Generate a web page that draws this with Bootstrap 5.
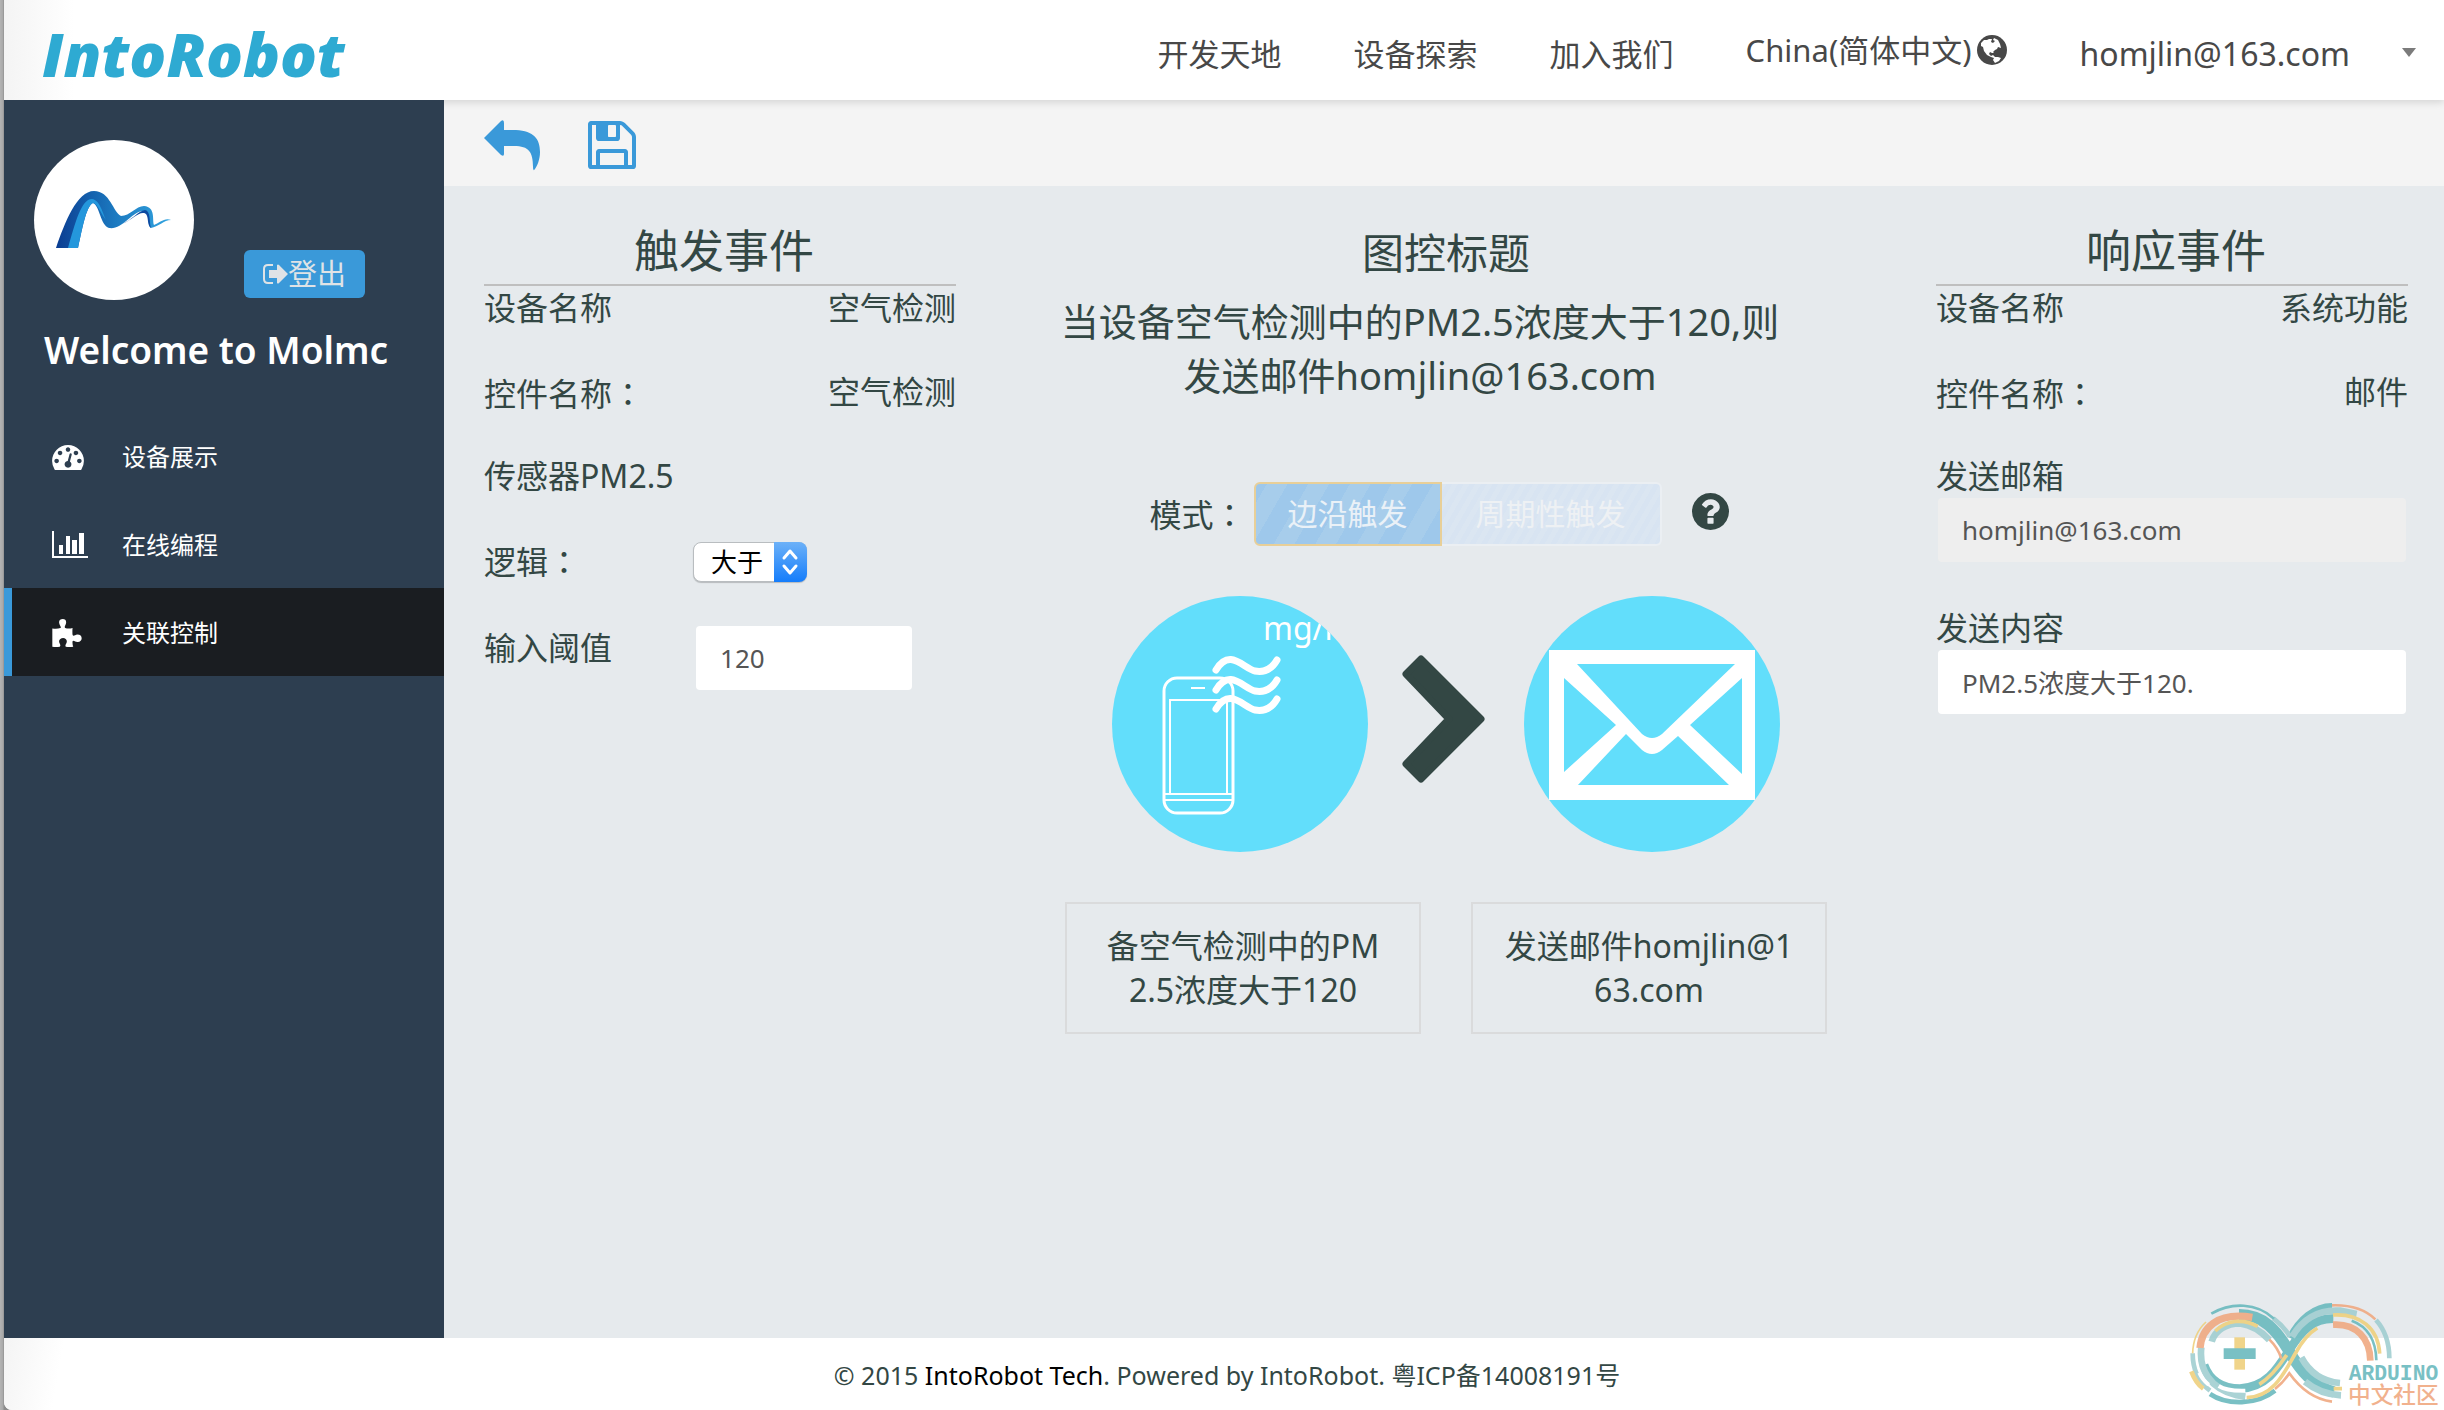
<!DOCTYPE html>
<html lang="zh-CN">
<head>
<meta charset="utf-8">
<meta name="viewport" content="width=device-width, initial-scale=1">
<title>IntoRobot</title>
<link href="https://cdn.jsdelivr.net/npm/bootstrap@5.3.0/dist/css/bootstrap.min.css" rel="stylesheet">
<style>
  :root { --ink: #334744; --blue: #3a99d9; --navy: #2d3e50; --sky: #62defb; }
  body {
    font-family: "Noto Sans", "Noto Sans CJK SC", sans-serif;
    font-size: 32px; line-height: 44px; color: var(--ink);
    background: linear-gradient(90deg, #b4b4b4, #a8a8a8 3px, #8c8c8c 4px);
    padding-left: 4px;
  }
  a { text-decoration: none; color: inherit; }
  svg { display: block; flex: none; }
  .wide-colon { font-family: "Noto Sans CJK TC", sans-serif; }

  .shell { background: #fff; border-bottom-left-radius: 8px; overflow: hidden; }
  .topbar {
    height: 100px; padding: 0 28px 0 38px; z-index: 2;
    background: linear-gradient(90deg, #f4f4f4, #fff 70px);
    box-shadow: 0 2px 8px rgba(0, 0, 0, .14);
  }
  .brand { font: italic 800 61px/70px "Open Sans", sans-serif; color: #2eaad2; padding-top: 8px; }
  .topnav { font-size: 31px; color: #484848; gap: 72px; }
  .account { font-size: 32px; }
  .raised { margin-bottom: 8px; }
  .drop { border: 7px solid transparent; border-top: 9px solid #7b7b7b; border-bottom: 0; margin: 0 0 4px 52px; }

  .sidebar { width: 440px; background: var(--navy); z-index: 3; color: #fff; padding-top: 40px; }
  .profile { padding: 0 30px; }
  .exit-btn {
    background: var(--blue); color: #dfe3e6; border: 0; border-radius: 6px;
    font-size: 29px; line-height: 48px; padding: 0 19px; margin: 0 0 2px 50px;
  }
  .welcome { font-size: 37px; line-height: 52px; font-weight: 600; padding: 24px 40px 36px; margin: 0; }
  .menu a { height: 88px; font-size: 24px; padding: 2px 0 0 40px; border-left: 8px solid transparent; }
  .menu a.active { background: #1a1d21; border-color: var(--blue); }
  .menu-icon { width: 70px; }

  .tools { height: 86px; background: #f4f4f4; padding: 4px 40px 0; gap: 48px; }
  .tools button { background: none; border: 0; padding: 0; }
  .board { background: #e6eaed; padding: 32px 36px 0 40px; }
  .side-panel { flex: 0 0 472px; }
  .panel-title { font-size: 45px; line-height: 66px; font-weight: 400; border-bottom: 2px solid #bfbfbf; margin: 0; padding-left: 8px; text-align: center; }
  .line { height: 84px; }
  .field {
    width: 100%; height: 64px; border: 0; border-radius: 4px; background: #fff;
    font-size: 26px; color: #555; padding: 0 24px;
  }
  .field:disabled { background: #eee; opacity: 1; }
  .field-wrap { padding: 0 2px; }
  .gap-below { margin-bottom: 44px; }
  .short { width: 216px; margin-left: 84px; }
  .picker {
    appearance: none; width: 114px; height: 40px; margin-left: 97px; padding: 0 0 0 17px;
    border: 1px solid #b9bdc0; border-radius: 8px; background: #fff; color: #000; font-size: 26px; line-height: 36px;
    box-shadow: 0 1px 1px rgba(0, 0, 0, .2);
  }
  .picker-caps { right: 0; top: 0; width: 33px; height: 40px; border-radius: 0 8px 8px 0; background: linear-gradient(#6cb1f8, #157dfb); pointer-events: none; }

  .center-title { font-size: 42px; line-height: 66px; font-weight: 400; margin: 0; padding-top: 2px; text-align: center; }
  .summary { font-size: 38px; line-height: 54px; padding: 8px 52px 0 0; margin: 0; text-align: center; }
  .mode { padding: 80px 14px 0 0; }
  .mode-btn { border: 2px solid; height: 64px; font-size: 30px; padding: 0 32px; line-height: 56px; }
  .mode-edge { color: #eaf1f7; border-color: #e8cf98; border-radius: 6px 0 0 6px;
    background: repeating-linear-gradient(-60deg, #9ec8eb 0 18px, #a7cdeb 18px 36px); }
  .mode-cycle { color: #eef1f4; border-color: #ebeff3; border-left: 0; border-radius: 0 6px 6px 0; padding: 0 34px;
    background: repeating-linear-gradient(-60deg, #d8e4f2 0 5px, #dbe6f2 5px 10px); }
  .help { margin: 0 0 6px 30px; }
  .flow { padding-top: 50px; }
  .chev { margin: 0 39px 0 34px; padding-bottom: 10px; }
  .notes { padding-top: 50px; gap: 50px; }
  .note { width: 356px; height: 132px; border: 2px solid #dadbdc; text-align: center; padding-top: 20px; }

  .site-foot { height: 72px; font-size: 25px; padding: 2px 0 0 6px; background: linear-gradient(100deg, #f4f4f4, #fff 60px); }
  .site-foot a { color: #000; }
  .watermark { right: 0; bottom: 0; z-index: 5; pointer-events: none; }
</style>
</head>
<body>
<div class="shell d-flex flex-column min-vh-100 position-relative">
  <header class="topbar d-flex align-items-center justify-content-between position-relative">
    <a href="#" class="brand">IntoRobot</a>
    <nav class="topnav d-flex align-items-center pt-2">
      <a href="#">开发天地</a>
      <a href="#">设备探索</a>
      <a href="#">加入我们</a>
      <a href="#" class="raised d-flex align-items-center gap-1">China(简体中文)
        <svg width="32" height="32" viewBox="-1 -1 32 32"><circle cx="15" cy="15" r="15" fill="#484848"/><path fill="#fff" d="M4 8L7 5L10 5L12 4L15 4L14 7L16 8L18 6L16 5L17 3L21 5L23 9L24 13L21 12L20 14L18 15L16 17L17 18L15 18L13 17L12 19L14 21L16 20L18 22L21 22L24 23L22 26L18 28L16 25L17 23L14 22L10 20L7 16L6 12L4 11Z"/></svg></a>
      <a href="#" class="account d-flex align-items-center">homjlin@163.com<span class="drop"></span></a>
    </nav>
  </header>

  <div class="d-flex flex-grow-1">
    <aside class="sidebar flex-shrink-0 position-relative">
      <div class="profile d-flex align-items-end">
        <svg width="160" height="160" viewBox="0 0 160 160" role="img" aria-label="Molmc">
          <defs>
            <linearGradient id="rib" x1="0" x2="1"><stop offset="0" stop-color="#0b3d91"/><stop offset=".5" stop-color="#1b78bf"/><stop offset="1" stop-color="#33a5e0"/></linearGradient>
          </defs>
          <circle cx="80" cy="80" r="80" fill="#fff"/>
          <path fill="url(#rib)" d="M22 108C31 82 43 51 60 51C76 51 79 72 87 76C96 76 102 66 110 66C122 67 118 80 120 85C125 83 131 77 137 80C130 80 124 87 117 88C112 84 118 70 108 71C97 73 88 90 75 88C66 85 66 66 59 63C52 66 48 90 44 108Z"/>
          <path fill="#2497dc" d="M34 108C41 84 47 59 58 59C66 60 69 74 72 80C67 74 64 64 59 63C52 66 48 90 44 108Z"/>
          <path fill="#0d4aa0" d="M88 84C98 80 104 71 111 70C117 71 115 82 117 88C112 84 116 73 109 73C103 73 98 80 88 84Z"/>
        </svg>
        <button type="button" class="exit-btn d-flex align-items-center">
          <svg width="25" height="20" viewBox="0 0 25 20"><path d="M10 1H5Q1 1 1 5V15Q1 19 5 19H10" fill="none" stroke="#dfe3e6" stroke-width="2"/><path fill="#dfe3e6" d="M6 6H14V1Q15 0 16 1L25 10L16 19Q15 20 14 19V14H6Z"/></svg><span>登出</span>
        </button>
      </div>
      <h2 class="welcome">Welcome to Molmc</h2>
      <nav class="menu">
        <a href="#" class="d-flex align-items-center"><span class="menu-icon"><svg width="32" height="25" viewBox="0 256 1792 1408" fill="#fff"><path d="M384 1152q0-53-37.500-90.500t-90.500-37.500-90.500 37.500-37.500 90.500 37.500 90.500 90.500 37.500 90.500-37.500 37.500-90.500zm192-448q0-53-37.500-90.500t-90.500-37.500-90.500 37.500-37.500 90.500 37.500 90.500 90.500 37.500 90.500-37.500 37.500-90.500zm428 481l101-382q6-26-7.500-48.500t-38.500-29.500-48 6.500-30 39.500l-101 382q-60 5-107 43.500t-63 98.500q-20 77 20 146t117 89 146-20 89-117q16-60-6-117t-72-91zm660-33q0-53-37.500-90.500t-90.500-37.500-90.500 37.500-37.500 90.500 37.500 90.500 90.500 37.500 90.500-37.500 37.500-90.500zm-640-640q0-53-37.500-90.500t-90.500-37.500-90.500 37.500-37.500 90.500 37.500 90.500 90.500 37.500 90.500-37.500 37.500-90.500zm448 192q0-53-37.500-90.500t-90.500-37.500-90.500 37.500-37.500 90.500 37.500 90.500 90.500 37.500 90.500-37.500 37.500-90.500zm320 448q0 261-141 483-19 29-54 29h-1402q-35 0-54-29-141-221-141-483 0-182 71-348t191-286 286-191 348-71 348 71 286 191 191 286 71 348z"/></svg></span>设备展示</a>
        <a href="#" class="d-flex align-items-center"><span class="menu-icon"><svg width="36" height="28" viewBox="0 0 36 28" fill="#fff"><path d="M0 0h2v25h34v2H0zM7 14h4v9H7zM14 5h4v18h-4zM20 9h5v14h-5zM27 2h5v21h-5z"/></svg></span>在线编程</a>
        <a href="#" class="active d-flex align-items-center"><span class="menu-icon"><svg width="30" height="28" viewBox="0 0 87 83" fill="#fff"><path d="M0 28Q14 30 24 27C28 24 20 18 20 10C20 3 25 0 31 0S41 3 41 10C41 18 34 22 38 27Q48 30 60 27Q59 38 60 47C62 53 67 47 74 46C83 46 87 51 87 57S82 69 74 68C68 68 63 61 60 66Q59 75 62 82Q50 84 40 82C36 78 43 74 43 66C43 60 38 56 32 56S20 60 20 66C20 73 27 78 22 82Q11 84 0 82Z"/></svg></span>关联控制</a>
      </nav>
    </aside>

    <div class="d-flex flex-column flex-grow-1">
      <div class="tools d-flex align-items-center">
        <button type="button" aria-label="返回"><svg width="56" height="51" viewBox="0 0 56 51"><path fill="#3a99d9" d="M0 18L17 1Q20-1 20 3V10H32C50 11 56 19 56 32C56 40 53 46 51 49Q49 52 49 47C49 32 45 26 30 26H20V34Q20 37 17 35Z"/></svg></button>
        <button type="button" aria-label="保存"><svg width="48" height="48" viewBox="128 128 1536 1536" fill="#3a99d9"><path d="M512 1536h768v-384h-768v384zm896 0h128v-896q0-14-10-38.500t-20-34.500l-281-281q-10-10-34-20t-39-10v416q0 40-28 68t-68 28h-576q-40 0-68-28t-28-68v-416h-128v1280h128v-416q0-40 28-68t68-28h832q40 0 68 28t28 68v416zm-384-928v-320q0-13-9.500-22.500t-22.500-9.500h-192q-13 0-22.500 9.500t-9.500 22.500v320q0 13 9.500 22.500t22.500 9.500h192q13 0 22.500-9.500t9.500-22.500zm640 32v928q0 40-28 68t-68 28h-1344q-40 0-68-28t-28-68v-1344q0-40 28-68t68-28h928q40 0 88 20t76 48l280 280q28 28 48 76t20 88z"/></svg></button>
      </div>

      <main class="board d-flex flex-grow-1">
        <section class="side-panel">
          <h3 class="panel-title">触发事件</h3>
          <div class="line d-flex justify-content-between"><span>设备名称</span><span>空气检测</span></div>
          <div class="line d-flex justify-content-between"><span>控件名称<span class="wide-colon" lang="zh-TW">：</span></span><span>空气检测</span></div>
          <div class="line">传感器PM2.5</div>
          <div class="line d-flex align-items-start">
            <label for="logic">逻辑<span class="wide-colon" lang="zh-TW">：</span></label>
            <div class="position-relative d-flex pt-1 ms-3">
              <select id="logic" class="picker"><option>大于</option></select>
              <span class="picker-caps position-absolute mt-1"><svg width="33" height="40" viewBox="0 0 33 40" fill="none" stroke="#fff" stroke-width="3" stroke-linecap="round" stroke-linejoin="round"><path d="M10 16l6-7 6 7M10 24l6 7 6-7"/></svg></span>
            </div>
          </div>
          <div class="line d-flex align-items-start pt-1">
            <label for="limit">输入阈值</label>
            <input id="limit" class="field short" value="120">
          </div>
        </section>

        <section class="flex-grow-1">
          <h3 class="center-title">图控标题</h3>
          <p class="summary">当设备空气检测中的PM2.5浓度大于120,则<br>发送邮件homjlin@163.com</p>
          <div class="mode d-flex align-items-center justify-content-center">
            <span class="me-2">模式<span class="wide-colon" lang="zh-TW">：</span></span>
            <button type="button" class="mode-btn mode-edge">边沿触发</button>
            <button type="button" class="mode-btn mode-cycle">周期性触发</button>
            <svg class="help" width="37" height="37" viewBox="128 128 1536 1536" fill="#334744" role="img" aria-label="帮助"><path d="M1024 1376v-192q0-14-9-23t-23-9h-192q-14 0-23 9t-9 23v192q0 14 9 23t23 9h192q14 0 23-9t9-23zm256-672q0-88-55.500-163t-138.500-116-170-41q-243 0-371 213-15 24 8 42l132 100q7 6 19 6 16 0 25-12 53-68 86-92 34-24 86-24 48 0 85.500 26t37.500 59q0 38-20 61t-68 45q-63 28-115.500 86.500t-52.500 125.500v36q0 14 9 23t23 9h192q14 0 23-9t9-23q0-19 21.500-49.500t54.500-49.500q32-18 49-28.500t46-35 44.500-48 28-60.500 12.500-81zm384 192q0 209-103 385.500t-279.500 279.500-385.500 103-385.500-103-279.500-279.500-103-385.500 103-385.500 279.500-279.500 385.500-103 385.500 103 279.500 279.500 103 385.500z"/></svg>
          </div>
          <div class="flow d-flex align-items-center justify-content-center">
            <svg width="256" height="256" viewBox="0 0 256 256">
              <clipPath id="disc"><circle cx="128" cy="128" r="128"/></clipPath>
              <g clip-path="url(#disc)">
                <rect width="256" height="256" fill="#62defb"/>
                <text x="151" y="44" font-size="32" fill="#fff">mg/m</text>
                <g fill="none" stroke="#fff">
                  <rect x="52" y="82" width="69" height="135" rx="13" stroke-width="3"/>
                  <path d="M58 197V104H115V197" stroke-width="2"/>
                  <path d="M79 92H93M53 198H120M53 204H120" stroke-width="2"/>
                  <path d="M104 74C118 51 132 73 143 75C154 77 161 71 165 64M104 94C118 71 132 93 143 95C154 97 161 91 165 84M104 113C118 90 132 112 143 114C154 116 161 110 165 103" stroke-width="7" stroke-linecap="round"/>
                </g>
              </g>
            </svg>
            <div class="chev"><svg width="83" height="128" viewBox="0 0 83 128"><path d="M4 19L19 4L79 64L19 124L4 109L47 64Z" fill="#334744" stroke="#334744" stroke-width="7" stroke-linejoin="round"/></svg></div>
            <svg width="256" height="256" viewBox="0 0 256 256">
              <circle cx="128" cy="128" r="128" fill="#62defb"/>
              <path fill="#fff" d="M25 54H231V204H25Z"/>
              <path fill="#62defb" d="M53 68H211L138 138Q128 146 118 138ZM40 82L92 129L40 176ZM218 82L166 129L218 178ZM102 138L54 189H205L154 140L138 154Q128 162 118 154Z"/>
            </svg>
          </div>
          <div class="notes d-flex justify-content-center">
            <div class="note">备空气检测中的PM<br>2.5浓度大于120</div>
            <div class="note">发送邮件homjlin@1<br>63.com</div>
          </div>
        </section>

        <section class="side-panel">
          <h3 class="panel-title">响应事件</h3>
          <div class="line d-flex justify-content-between"><span>设备名称</span><span>系统功能</span></div>
          <div class="line d-flex justify-content-between"><span>控件名称<span class="wide-colon" lang="zh-TW">：</span></span><span>邮件</span></div>
          <label for="mailbox" class="d-block">发送邮箱</label>
          <div class="field-wrap gap-below"><input id="mailbox" class="field" value="homjlin@163.com" disabled></div>
          <label for="content" class="d-block">发送内容</label>
          <div class="field-wrap"><input id="content" class="field" value="PM2.5浓度大于120."></div>
        </section>
      </main>
    </div>
  </div>

  <footer class="site-foot d-flex align-items-center justify-content-center">
    <div>© 2015 <a href="#">IntoRobot Tech</a>. Powered by IntoRobot. 粤ICP备14008191号</div>
  </footer>

  <div class="watermark position-absolute">
    <svg width="284" height="140" viewBox="0 0 852 420" fill="none" opacity=".88">
      <g stroke-width="22">
        <path stroke="#67b8bd" stroke-width="34" d="M237 134C310 134 350 180 388 245C420 300 460 350 522 366"/>
        <path stroke="#67b8bd" stroke-width="26" d="M392 205C420 150 465 112 516 112M132 285C150 335 190 356 240 356C320 350 350 300 388 240C425 180 460 145 520 146"/>
        <path stroke="#9fcdd0" stroke-width="20" d="M396 200C430 145 480 118 540 122L590 132M155 215C165 180 200 160 240 160C280 165 305 185 328 210M124 232C116 300 150 355 230 376L256 380M424 262C450 310 490 335 540 339M435 335C465 360 500 374 543 376"/>
        <path stroke="#9fcdd0" stroke-width="14" d="M98 250C98 305 120 340 150 362M340 145C360 160 378 180 390 200M648 150C675 180 688 215 688 265"/>
        <path stroke="#67b8bd" stroke-width="8" d="M154 131C215 96 290 98 342 146M575 152C625 170 648 215 649 271"/>
        <path stroke="#67b8bd" stroke-width="14" d="M150 372C200 406 290 406 345 362"/>
        <path stroke="#f0a77e" d="M120 234C125 175 170 125 277 142"/>
        <path stroke="#f0a77e" stroke-width="20" d="M519 164C590 160 630 205 631 272"/>
        <path stroke="#f0a77e" stroke-width="8" d="M516 106C575 104 615 118 646 148M328 208C345 225 358 245 364 266M345 357C360 345 375 330 388 310C420 355 460 388 516 395"/>
        <path stroke="#efcf7a" stroke-width="11" d="M166 183C200 150 250 145 293 169M519 135C600 130 655 175 659 251M260 383C340 380 372 310 405 252C425 215 445 190 472 174M298 343C335 320 360 285 380 255M521 356H546"/>
        <path stroke="#efcf7a" stroke-width="14" d="M94 304C103 328 115 345 130 356"/>
        <path stroke="#efcf7a" stroke-width="5" d="M98 250C99 210 112 180 138 156"/>
        <path stroke="#fff" stroke-width="12" d="M176 348C195 360 225 363 256 362M118 308C124 322 134 334 146 344"/>
      </g>
      <path fill="#efcf7a" d="M223 202h32v97h-32z"/><path fill="#67b8bd" d="M191 235h96v32h-96z"/>
      <text x="566" y="331" font-family="Liberation Mono" font-weight="700" font-size="64" fill="#67b8bd">ARDUINO</text>
      <text x="564" y="399" font-family="Noto Sans CJK SC" font-weight="500" font-size="68" fill="#f0a77e">中文社区</text>
    </svg>
  </div>
</div>
<script src="https://cdn.jsdelivr.net/npm/bootstrap@5.3.0/dist/js/bootstrap.bundle.min.js"></script>
</body>
</html>
